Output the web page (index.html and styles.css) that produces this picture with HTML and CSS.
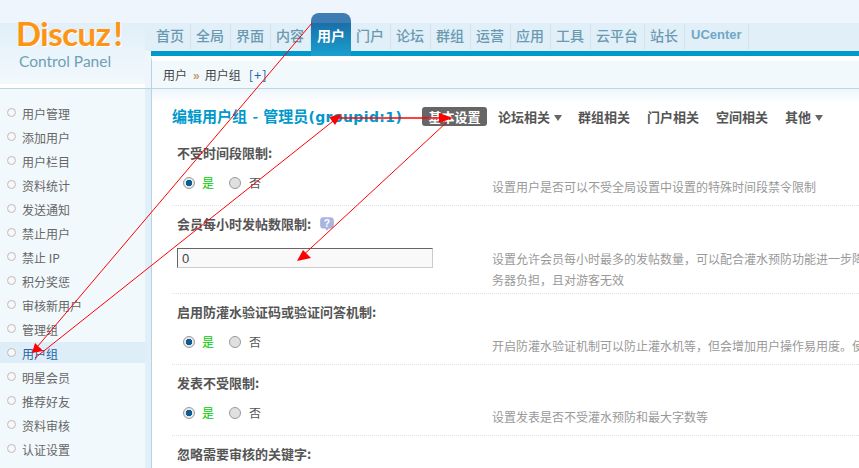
FILE: index.html

```html
<!DOCTYPE html>
<html lang="zh-CN">
<head>
  <meta charset="UTF-8">
  <title>Discuz! Control Panel</title>
  <link rel="stylesheet" href="styles.css">
</head>
<body>
<div class="header">
  <div class="logo">
    <div class="logo-name">Discuz<span>!</span></div>
    <div class="logo-sub">Control Panel</div>
  </div>
  <div class="gutter"></div>
  <div class="head-right">
    <ul class="nav">
      <li>首页</li>
      <li>全局</li>
      <li>界面</li>
      <li>内容</li>
      <li class="current">用户</li>
      <li>门户</li>
      <li>论坛</li>
      <li>群组</li>
      <li>运营</li>
      <li>应用</li>
      <li>工具</li>
      <li>云平台</li>
      <li>站长</li>
      <li class="latin">UCenter</li>
    </ul>
    <div class="crumb">用户<b>»</b>用户组<a href="#">[+]</a></div>
  </div>
</div>
<div class="page">
  <ul class="side">
    <li>用户管理</li>
    <li>添加用户</li>
    <li>用户栏目</li>
    <li>资料统计</li>
    <li>发送通知</li>
    <li>禁止用户</li>
    <li>禁止 IP</li>
    <li>积分奖惩</li>
    <li>审核新用户</li>
    <li>管理组</li>
    <li class="current">用户组</li>
    <li>明星会员</li>
    <li>推荐好友</li>
    <li>资料审核</li>
    <li>认证设置</li>
  </ul>
  <div class="gutter"></div>
  <div class="main">
    <div class="title-row">
      <h3>编辑用户组 - 管理员<span>(groupid:1)</span></h3>
      <ul class="tabs">
        <li class="current">基本设置</li>
        <li class="drop">论坛相关</li>
        <li>群组相关</li>
        <li>门户相关</li>
        <li>空间相关</li>
        <li class="drop">其他</li>
      </ul>
    </div>

    <div class="row">
      <div class="label">不受时间段限制:</div>
      <div class="field">
        <div class="radios">
          <span class="radio on"></span><span class="yes">是</span>
          <span class="radio"></span><span class="no">否</span>
        </div>
        <div class="desc">设置用户是否可以不受全局设置中设置的特殊时间段禁令限制</div>
      </div>
    </div>

    <div class="row">
      <div class="label">会员每小时发帖数限制:
        <svg class="help" width="16" height="16" viewBox="0 0 14 14">
          <path d="M4 1h6a3 3 0 0 1 3 3v4a3 3 0 0 1-3 3H8.500L7 13 5.500 11H4a3 3 0 0 1-3-3V4a3 3 0 0 1 3-3z" fill="#aab4e0"/>
          <text x="7" y="9.500" text-anchor="middle" class="help-mark">?</text>
        </svg>
      </div>
      <div class="field field-input">
        <div class="input-cell"><input class="txt" type="text" value="0"></div>
        <div class="desc">设置允许会员每小时最多的发帖数量，可以配合灌水预防功能进一步降低服务器负担，且对游客无效</div>
      </div>
    </div>

    <div class="row">
      <div class="label">启用防灌水验证码或验证问答机制:</div>
      <div class="field">
        <div class="radios">
          <span class="radio on"></span><span class="yes">是</span>
          <span class="radio"></span><span class="no">否</span>
        </div>
        <div class="desc">开启防灌水验证机制可以防止灌水机等，但会增加用户操作易用度。使用</div>
      </div>
    </div>

    <div class="row">
      <div class="label">发表不受限制:</div>
      <div class="field">
        <div class="radios">
          <span class="radio on"></span><span class="yes">是</span>
          <span class="radio"></span><span class="no">否</span>
        </div>
        <div class="desc">设置发表是否不受灌水预防和最大字数等</div>
      </div>
    </div>

    <div class="row">
      <div class="label">忽略需要审核的关键字:</div>
    </div>
  </div>
</div>

<!-- 红色箭头标注 -->
<svg class="marks" width="859" height="468" viewBox="0 0 859 468">
  <g stroke="#f00" fill="none">
    <path d="M312 23L32 353"/>
    <path d="M35 358L337 118"/>
    <path d="M337 118H445" stroke-width="1.500"/>
    <path d="M447 122L298 260"/>
  </g>
  <g fill="#f00">
    <path d="M32 353L35 343 43 351z"/>
    <path d="M342 114L329 117 335 125z"/>
    <path d="M453 118L439 113V123z"/>
    <path d="M297 261L303 250 311 258z"/>
  </g>
</svg>
</body>
</html>
```

FILE: styles.css

```css
* {
  margin: 0;
  padding: 0;
  box-sizing: border-box;
}

ul {
  list-style: none;
}

html, body {
  height: 100%;
  overflow: hidden;
}

body {
  position: relative;
  background: #fff;
  font: 12px/20px "Noto Sans CJK SC", "Liberation Sans", sans-serif;
  color: #555;
}

.header {
  display: flex;
  height: 89px;
  background: linear-gradient(#eef5fc 0, #eef5fc 23px, #fff 23px);
  border-bottom: 1px solid #bcd4e0;
}

.logo {
  width: 145px;
  height: 84px;
  padding: 14px 0 0 16px;
  background: linear-gradient(#eef5fc 0, #eef5fc 23px, #e1eff9 23px, #f2f9fd 84px);
}

.logo-name {
  font: bold 33px/38px Lato, sans-serif;
  letter-spacing: -0.500px;
  color: #ff9412;
  text-shadow: 1px 1px 0 #fff;
}

.logo-name span {
  margin-left: 3px;
}

.logo-sub {
  margin-left: 3px;
  font: 15.500px/18px Lato, sans-serif;
  color: #6f9fb5;
}

.gutter {
  width: 7px;
  flex: none;
  background: #e1eff9;
  border-right: 1px solid #b8d3e0;
}

.header .gutter {
  background: linear-gradient(#eef5fc 0, #eef5fc 23px, #e1eff9 23px, #e1eff9 51px, #eef6fb 51px);
  border-right: 0;
  width: 6px;
}

.head-right {
  flex: 1;
}

.nav {
  display: flex;
  height: 56px;
  padding-top: 13px;
  background: linear-gradient(#eef5fc 0, #eef5fc 23px, #e1eff9 23px);
  border-bottom: 5px solid #09c;
}

.nav li {
  height: 38px;
  padding: 8px 7px 0 5px;
  font-size: 14px;
  line-height: 28px;
  font-weight: 500;
  color: #6a9ab0;
  background: linear-gradient(#d5e3ee, #d5e3ee) no-repeat right 11px / 1px 26px;
}

.nav li.current {
  width: 40px;
  height: 43px;
  margin-bottom: -5px;
  padding: 8px 0 0 6px;
  color: #fff;
  font-weight: bold;
  border-radius: 8px 8px 0 0;
  background: linear-gradient(#3f7cb4 0, #3f7cb4 10px, #1a6fa8 10px, #1aa0d0 100%);
}

.nav li.latin {
  padding-left: 6px;
  font: bold 13px/28px "Liberation Sans", sans-serif;
  color: #6fa8c4;
}

.crumb {
  height: 32px;
  padding: 5px 0 0 11px;
  border-left: 1px solid #b8d3e0;
  border-top: 5px solid #fff;
  background: #f2f9fd;
  color: #444;
  line-height: 18px;
}

.crumb b {
  margin: 0 5px 0 6px;
  color: #c79b6a;
  font-family: "Liberation Sans", sans-serif;
}

.crumb a {
  margin-left: 8px;
  font-size: 13px;
  letter-spacing: 1px;
  color: #2366a8;
  text-decoration: none;
}

.page {
  display: flex;
  height: 379px;
  overflow: hidden;
}

.side {
  width: 145px;
  flex: none;
  padding-top: 13px;
  background: #f2f9fd;
}

.side li {
  position: relative;
  height: 21px;
  margin-bottom: 3px;
  padding-left: 22px;
  line-height: 24px;
  color: #666;
}

.side li::before {
  content: "";
  position: absolute;
  left: 7px;
  top: 6px;
  width: 7px;
  height: 7px;
  border: 1px solid #bbb;
  border-radius: 50%;
  background: #f8f8f8;
}

.side li.current {
  background: #deeef9;
  color: #2366a8;
}

.main {
  flex: 1;
  min-width: 0;
  overflow: hidden;
  padding-left: 20px;
  background: linear-gradient(#eef6fc, #fff 14px);
}

.title-row {
  display: flex;
  align-items: center;
  height: 46px;
  padding-top: 8px;
}

.title-row h3 {
  width: 250px;
  flex: none;
  font-size: 15px;
  line-height: 20px;
  font-weight: bold;
  word-spacing: 2px;
  white-space: nowrap;
  color: #09c;
}

.title-row h3 span {
  font-family: "DejaVu Sans", sans-serif;
  font-size: 14px;
  letter-spacing: 0.400px;
}

.tabs {
  display: flex;
  font-size: 13px;
  font-weight: bold;
  color: #555;
}

.tabs li {
  height: 19px;
  margin-right: 13px;
  padding: 0 2px;
  line-height: 19px;
  white-space: nowrap;
}

.tabs li.current {
  width: 65px;
  margin-right: 9px;
  padding: 0;
  text-align: center;
  border-radius: 3px;
  background: #666;
  color: #fff;
}

.tabs li.drop {
  margin-right: 12px;
}

.tabs li.drop::after {
  content: "";
  display: inline-block;
  margin-left: 4px;
  vertical-align: 1px;
  border: 4px solid transparent;
  border-top: 6px solid #666;
  border-bottom: 0;
}

.row {
  padding: 8px 0 12px;
  border-bottom: 1px dotted #d3e4ef;
}

.row:last-child {
  padding-bottom: 0;
  border-bottom: 0;
}

.label {
  padding-left: 5px;
  font-size: 13px;
  font-weight: bold;
  color: #555;
}

.help {
  margin-left: 5px;
  vertical-align: -3px;
}

.help-mark {
  font: bold 9px "Liberation Sans", sans-serif;
  fill: #fff;
}

.field {
  display: flex;
  height: 20px;
  margin-top: 10px;
}

.field-input {
  height: 33px;
  margin-top: 14px;
}

.radios {
  display: flex;
  align-items: center;
  width: 320px;
  height: 20px;
  padding-left: 11px;
  flex: none;
}

.input-cell {
  width: 320px;
  padding-left: 5px;
  flex: none;
}

.radio {
  width: 12px;
  height: 12px;
  border: 1px solid #999;
  border-radius: 50%;
  background: #e0e0e0;
}

.radio.on {
  background: radial-gradient(circle, #0c5c94 0, #0c5c94 3px, #e8e8e8 3.500px);
}

.yes {
  width: 27px;
  margin-left: 7px;
  color: #00cc00;
}

.no {
  margin-left: 8px;
  color: #555;
}

.txt {
  display: block;
  width: 256px;
  height: 20px;
  padding: 0 4px;
  border: 1px solid;
  border-color: #666 #ccc #ccc #666;
  background: #f9f9f9;
  font: 13px "Liberation Sans", sans-serif;
  color: #444;
  outline: 0;
}

.desc {
  width: 396px;
  flex: none;
  margin-top: 3px;
  line-height: 21px;
  color: #999;
}

.field-input .desc {
  margin-top: 0;
}

.marks {
  position: absolute;
  left: 0;
  top: 0;
  pointer-events: none;
}
```
